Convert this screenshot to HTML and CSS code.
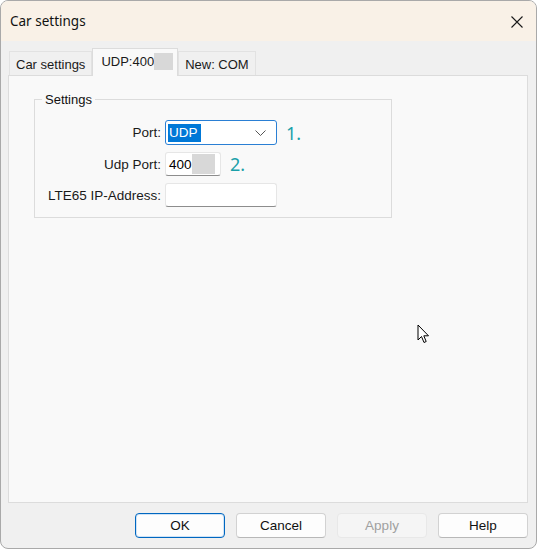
FILE: index.html
```html
<!DOCTYPE html>
<html lang="en">
<head>
    <meta charset="UTF-8">
    <title>Car settings</title>
    <link rel="stylesheet" href="styles.css">
</head>
<body>
    <div class="window">
        <header class="titlebar">
            <span class="title">Car settings</span>
            <span class="close">
                <svg width="12" height="12" viewBox="0 0 12 12"><path d="M0.5 0.5 L11.5 11.5 M11.5 0.5 L0.5 11.5" stroke="#1a1a1a" stroke-width="1.1" fill="none"/></svg>
            </span>
        </header>
        <div class="content">
            <nav class="tabs">
                <a class="tab">Car settings</a>
                <a class="tab active">UDP:400<span class="blur tab-blur"></span></a>
                <a class="tab">New: COM</a>
            </nav>
            <main class="panel">
                <fieldset class="group">
                    <legend>Settings</legend>
                    <div class="form">
                        <label>Port:</label>
                        <div class="field">
                            <div class="combo">
                                <span class="selected">UDP</span>
                                <svg class="chevron" width="11" height="6" viewBox="0 0 11 6"><path d="M0.5 0.5 L5.5 5.5 L10.5 0.5" stroke="#555" stroke-width="1" fill="none"/></svg>
                            </div>
                            <span class="note">1.</span>
                        </div>
                        <label>Udp Port:</label>
                        <div class="field">
                            <div class="input short">400<span class="blur"></span></div>
                            <span class="note">2.</span>
                        </div>
                        <label>LTE65 IP-Address:</label>
                        <div class="field">
                            <div class="input long"></div>
                        </div>
                    </div>
                </fieldset>
                <svg class="cursor" width="14" height="21" viewBox="0 0 14 21"><path d="M1 1 L1 16 L4.5 12.5 L7 18.5 L9.2 17.5 L6.8 11.8 L11.5 11.8 Z" fill="#fff" stroke="#000" stroke-width="1" stroke-linejoin="round"/></svg>
            </main>
            <footer class="buttons">
                <button class="btn default">OK</button>
                <button class="btn">Cancel</button>
                <button class="btn disabled">Apply</button>
                <button class="btn">Help</button>
            </footer>
        </div>
    </div>
</body>
</html>
```

FILE: styles.css
```css
body {
    margin: 0;
    background: #ffffff;
    font-family: "Liberation Sans", Arial, sans-serif;
    font-size: 12px;
    color: #000;
}
.window {
    width: 537px;
    height: 549px;
    box-sizing: border-box;
    border: 1px solid #a9a9a9;
    border-radius: 8px;
    overflow: hidden;
    background: #f0f0f0;
}
.titlebar {
    height: 40px;
    background: #f9f1e7;
    display: flex;
    align-items: center;
    justify-content: space-between;
    padding: 0 9px 0 9px;
}
.title {
    font-family: "Noto Sans", sans-serif;
    font-size: 13.5px;
    color: #111;
    margin-top: -1px;
}
.close {
    display: flex;
    margin-right: 4px;
    margin-top: 1px;
}
.content {
    position: relative;
    padding: 7px 8px 0 7px;
}
.tabs {
    display: flex;
    align-items: flex-end;
    height: 27px;
    padding-left: 1px;
    position: relative;
    z-index: 1;
}
.tab {
    height: 24px;
    box-sizing: border-box;
    padding: 5px 6px 0 6px;
    border: 1px solid #e2e2e2;
    border-bottom: none;
    background: #f0f0f0;
    color: #1a1a1a;
    font-size: 13px;
    display: flex;
    align-items: flex-start;
}
.tab.active {
    height: 28px;
    background: #f9f9f9;
    padding: 5px 4px 0 8px;
    border-color: #dcdcdc;
    margin-bottom: -1px;
}
.tab-blur {
    width: 19px;
    height: 17px;
    margin-top: -1px;
}
.blur {
    display: inline-block;
    background: #d8d8d8;
}
.panel {
    position: relative;
    height: 428px;
    box-sizing: border-box;
    background: #f9f9f9;
    border: 1px solid #dcdcdc;
    padding: 16px 0 0 25px;
}
.group {
    width: 358px;
    height: 126px;
    box-sizing: border-box;
    margin: 0;
    padding: 0;
    border: 1px solid #dcdcdc;
}
.group legend {
    margin-left: 7px;
    padding: 0 3px 0 3px;
    font-size: 13px;
    color: #111;
}
.form {
    display: grid;
    grid-template-columns: 126px auto;
    column-gap: 4px;
    row-gap: 7px;
    align-items: center;
    padding-top: 13px;
}
.form label {
    text-align: right;
    color: #1a1a1a;
    font-size: 13.5px;
}
.field {
    display: flex;
    align-items: center;
}
.combo {
    width: 112px;
    height: 25px;
    box-sizing: border-box;
    border: 1px solid #2a7fd4;
    border-radius: 3px;
    background: #fff;
    display: flex;
    align-items: center;
    justify-content: space-between;
    padding: 0 10px 0 2px;
}
.selected {
    background: #0078d7;
    color: #fff;
    font-size: 13.5px;
    padding: 1px 3px 1px 1px;
    line-height: 16px;
}
.chevron {
    margin-top: 1px;
}
.note {
    color: #1aa0a9;
    font-family: "Noto Sans", sans-serif;
    font-size: 18px;
    margin-left: 9px;
    line-height: 20px;
}
.input {
    height: 24px;
    box-sizing: border-box;
    background: #fff;
    border: 1px solid #e6e6e6;
    border-bottom: 1px solid #8d8d8d;
    border-radius: 3px;
    display: flex;
    align-items: center;
    padding: 0 4px 0 3px;
    font-size: 13.5px;
}
.input .blur {
    width: 23px;
    height: 20px;
}
.input.short {
    width: 56px;
}
.input.long {
    width: 112px;
}
.cursor {
    position: absolute;
    left: 408px;
    top: 248px;
}
.buttons {
    display: flex;
    justify-content: flex-end;
    gap: 11px;
    padding: 10px 0 0 0;
}
.btn {
    width: 90px;
    height: 25px;
    box-sizing: border-box;
    border: 1px solid #d2d2d2;
    border-bottom-color: #b8b8b8;
    border-radius: 4px;
    background: #fdfdfd;
    font-family: "Liberation Sans", Arial, sans-serif;
    font-size: 13.5px;
    color: #111;
    padding: 0;
}
.btn.default {
    border: 1px solid #0067c0;
    box-shadow: inset 0 0 0 1px #cfe3f6;
}
.btn.disabled {
    background: #f5f5f5;
    border-color: #e8e8e8;
    color: #a0a0a0;
}
```
